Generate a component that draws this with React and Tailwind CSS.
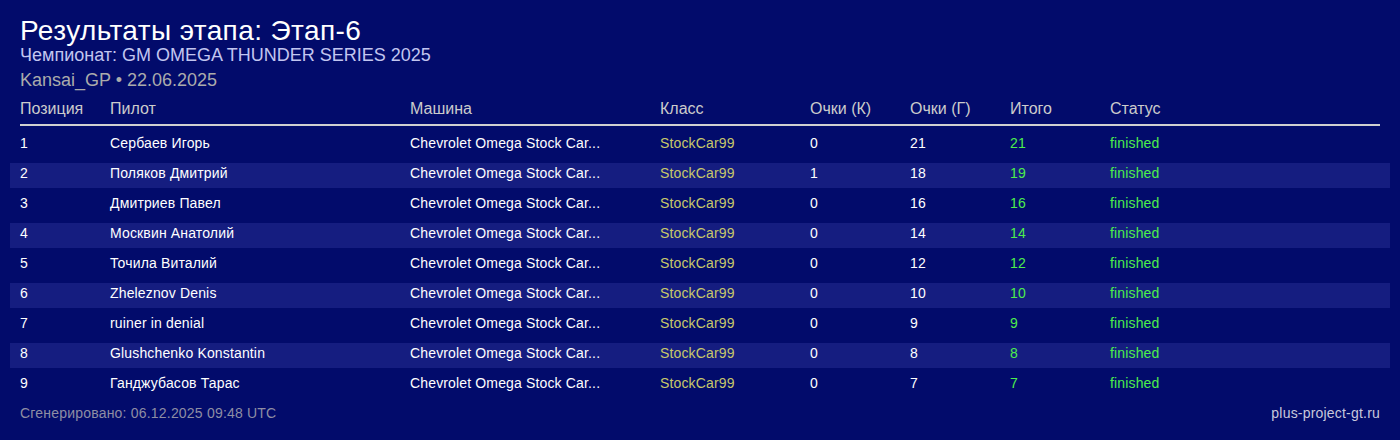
import React from 'react';

const rows = [
  ['1', 'Сербаев Игорь', 0, 21],
  ['2', 'Поляков Дмитрий', 1, 18],
  ['3', 'Дмитриев Павел', 0, 16],
  ['4', 'Москвин Анатолий', 0, 14],
  ['5', 'Точила Виталий', 0, 12],
  ['6', 'Zheleznov Denis', 0, 10],
  ['7', 'ruiner in denial', 0, 9],
  ['8', 'Glushchenko Konstantin', 0, 8],
  ['9', 'Ганджубасов Тарас', 0, 7],
];

export default function App() {
  return (
    <div className="w-[1400px] h-[440px] bg-[#020b6b] px-[20px] pt-[16px] overflow-hidden" style={{ fontFamily: '"Liberation Sans", Arial, sans-serif' }}>
      <h1 className="text-[28px] leading-[30px] tracking-[0.4px] text-white">Результаты этапа: Этап-6</h1>
      <div className="text-[18px] leading-[18px] text-[#c2c6f0]">Чемпионат: GM OMEGA THUNDER SERIES 2025</div>
      <div className="mt-[6px] text-[18px] leading-[20px] text-[#ababab]">Kansai_GP • 22.06.2025</div>

      <div className="mt-[10px] flex text-[16px] leading-[18px] text-[#cccccc] pb-[6px] border-b-2 border-[#d0d0d0]">
        <div className="w-[90px]">Позиция</div>
        <div className="w-[300px]">Пилот</div>
        <div className="w-[250px]">Машина</div>
        <div className="w-[150px]">Класс</div>
        <div className="w-[100px]">Очки (К)</div>
        <div className="w-[100px]">Очки (Г)</div>
        <div className="w-[100px]">Итого</div>
        <div className="flex-1">Статус</div>
      </div>

      <div className="-mx-[10px] mt-[7px] flex flex-col gap-[5px]">
        {rows.map(([pos, name, k, g], i) => (
          <div key={pos} className={`flex h-[25px] px-[10px] pt-[2px] text-[14px] leading-[16px] tracking-[0.15px] text-white ${i % 2 === 1 ? 'bg-[#151d80]' : ''}`}>
            <div className="w-[90px]">{pos}</div>
            <div className="w-[300px]">{name}</div>
            <div className="w-[250px]">Chevrolet Omega Stock Car...</div>
            <div className="w-[150px] text-[#c8c86a]">StockCar99</div>
            <div className="w-[100px]">{k}</div>
            <div className="w-[100px]">{g}</div>
            <div className="w-[100px] text-[#4cee4c]">{k + g}</div>
            <div className="flex-1 text-[#4cee4c]">finished</div>
          </div>
        ))}
      </div>

      <div className="mt-[7px] flex justify-between text-[14px] leading-[16px] tracking-[0.2px]">
        <span className="text-[#8e8ea4]">Сгенерировано: 06.12.2025 09:48 UTC</span>
        <span className="text-[#c8c8dc]">plus-project-gt.ru</span>
      </div>
    </div>
  );
}
